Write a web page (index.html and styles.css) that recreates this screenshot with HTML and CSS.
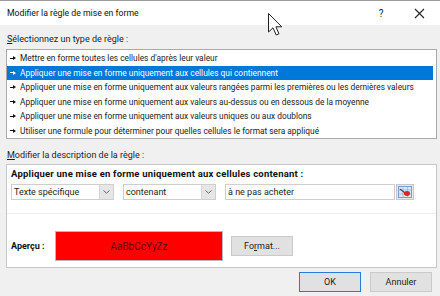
FILE: index.html
```html
<!DOCTYPE html>
<html lang="fr">

<head>
	<meta charset="UTF-8">
	<title>Modifier la règle de mise en forme</title>
	<link rel="stylesheet" href="styles.css">
</head>

<body>
	<div class="dialog">
		<div class="titlebar">
			<span class="title">Modifier la règle de mise en forme</span>
			<span class="help">?</span>
			<span class="close">
				<svg width="11" height="11" viewBox="0 0 11 11"><path d="M1 1L10 10M10 1L1 10" stroke="#222" stroke-width="1.1" fill="none" /></svg>
			</span>
		</div>

		<div class="body">
			<div class="group-label"><u>S</u>électionnez un type de règle :</div>
			<div class="rule-list">
				<div class="rule"><span class="arrow"></span>Mettre en forme toutes les cellules d'après leur valeur</div>
				<div class="rule selected"><span class="arrow"></span>Appliquer une mise en forme uniquement aux cellules qui contiennent</div>
				<div class="rule"><span class="arrow"></span>Appliquer une mise en forme uniquement aux valeurs rangées parmi les premières ou les dernières valeurs</div>
				<div class="rule"><span class="arrow"></span>Appliquer une mise en forme uniquement aux valeurs au-dessus ou en dessous de la moyenne</div>
				<div class="rule"><span class="arrow"></span>Appliquer une mise en forme uniquement aux valeurs uniques ou aux doublons</div>
				<div class="rule"><span class="arrow"></span>Utiliser une formule pour déterminer pour quelles cellules le format sera appliqué</div>
			</div>

			<div class="group-label second"><u>M</u>odifier la description de la règle :</div>
			<div class="desc-box">
				<div class="desc-title">Appliquer une mise en forme uniquement aux cellules contenant :</div>
				<div class="criteria">
					<div class="select first-select">
						<span class="value">Texte spécifique</span>
						<span class="drop">
							<svg width="7" height="4" viewBox="0 0 7 4"><path d="M0.5 0.5L3.5 3.2L6.5 0.5" stroke="#666" fill="none" /></svg>
						</span>
					</div>
					<div class="select second-select">
						<span class="value">contenant</span>
						<span class="drop">
							<svg width="7" height="4" viewBox="0 0 7 4"><path d="M0.5 0.5L3.5 3.2L6.5 0.5" stroke="#666" fill="none" /></svg>
						</span>
					</div>
					<div class="text-input">à ne pas acheter</div>
					<div class="ref-btn">
						<svg width="14" height="12" viewBox="0 0 14 12">
							<rect x="0.5" y="0.5" width="13" height="11" fill="#dfe9f5" stroke="#7a9cc6" />
							<path d="M0.5 4H13.5M0.5 8H13.5M5 0.5V11.5M9.5 0.5V11.5" stroke="#9bb4d4" stroke-width="0.8" />
							<path d="M2 3L7 7" stroke="#2a4f8a" stroke-width="1.3" />
							<ellipse cx="9" cy="7.5" rx="3" ry="2.4" fill="#e0251b" />
						</svg>
					</div>
				</div>
				<div class="separator"></div>
				<div class="preview-row">
					<span class="preview-label">Aperçu :</span>
					<div class="preview">AaBbCcYyZz</div>
					<button type="button" class="btn format-btn">Fo<u>r</u>mat...</button>
				</div>
			</div>

			<div class="button-group">
				<button type="button" class="btn ok-btn">OK</button>
				<button type="button" class="btn">Annuler</button>
			</div>
		</div>

		<svg class="cursor" width="15" height="23" viewBox="0 0 15 23">
			<path d="M0.5 0.5V19L5 14.8L8.2 22L11 20.8L7.9 13.8H13.8Z" fill="#fff" stroke="#222" stroke-width="1" stroke-linejoin="round" />
		</svg>
	</div>
</body>

</html>
```

FILE: styles.css
```css
* {
	box-sizing: border-box;
}

body {
	margin: 0;
	font-family: Roboto, 'Open Sans', sans-serif;
	font-size: 9px;
	color: #1e1e1e;
}

.dialog {
	position: relative;
	width: 440px;
	height: 296px;
	background-color: #f0f0f0;
	overflow: hidden;
}

.titlebar {
	display: flex;
	align-items: center;
	height: 25px;
	background-color: #fff;
	border-top: 1px solid #9a9a9a;
	padding-left: 7px;
}

.title {
	flex: 1;
	font-size: 8.7px;
	color: #111;
}

.help {
	width: 38px;
	margin-left: 4px;
	font-size: 10px;
	color: #222;
	text-align: center;
}

.close {
	display: flex;
	justify-content: center;
	width: 38px;
	margin-right: 2px;
}

.body {
	padding: 0 3px 0 6px;
}

.group-label {
	height: 24px;
	padding: 9px 0 0 1px;
}

.group-label.second {
	height: 25px;
	padding-top: 11px;
}

.rule-list {
	background-color: #fff;
	border: 1px solid #a9a9a9;
	padding: 1px 3px 1px 0;
	height: 90px;
	overflow: hidden;
}

.rule {
	display: flex;
	align-items: center;
	height: 14.5px;
	white-space: nowrap;
	font-size: 8.35px;
	color: #222;
}

.rule .arrow {
	flex-shrink: 0;
	position: relative;
	width: 13px;
	height: 14px;
}

/* petite flèche noire devant chaque type de règle */
.rule .arrow::before {
	content: '';
	position: absolute;
	left: 3px;
	top: 6.5px;
	width: 4px;
	height: 1px;
	background-color: #111;
}

.rule .arrow::after {
	content: '';
	position: absolute;
	left: 6px;
	top: 5px;
	border-left: 3px solid #111;
	border-top: 2px solid transparent;
	border-bottom: 2px solid transparent;
}

.rule.selected {
	background-color: #0078d7;
	color: #fff;
}

.rule.selected .arrow::before {
	background-color: #fff;
}

.rule.selected .arrow::after {
	border-left-color: #fff;
}

.desc-box {
	background-color: #fff;
	border: 1px solid #c6c6c6;
	height: 104px;
	padding: 2px 0 0 4px;
}

.desc-title {
	font-size: 9.5px;
	font-weight: 700;
	letter-spacing: 0.2px;
	height: 17px;
	line-height: 14px;
	color: #111;
}

.criteria {
	display: flex;
	align-items: center;
	gap: 9px;
	height: 16px;
}

.select {
	display: flex;
	height: 16px;
	border: 1px solid #cfcfcf;
	background-color: #fff;
}

.select .value {
	flex: 1;
	line-height: 14px;
	padding-left: 2px;
}

.select .drop {
	display: flex;
	align-items: center;
	justify-content: center;
	width: 14px;
	background-color: #e6e6e6;
	border-left: 1px solid #d6d6d6;
}

.first-select {
	width: 103px;
}

.second-select {
	width: 93px;
}

.text-input {
	width: 170px;
	height: 16px;
	border: 1px solid #cfcfcf;
	line-height: 14px;
	padding-left: 2px;
}

.ref-btn {
	display: flex;
	align-items: center;
	justify-content: center;
	width: 18px;
	height: 16px;
	margin-left: -8px;
	background-color: #e8e8e8;
	border: 1px solid #c8c8c8;
}

.separator {
	height: 1px;
	margin: 13px 0 0 -4px;
	background-color: #ececec;
}

.preview-row {
	display: flex;
	align-items: center;
	margin-top: 17px;
}

.preview-label {
	font-weight: 700;
	width: 44px;
	color: #111;
}

.preview {
	width: 168px;
	height: 30px;
	background-color: #ff0000;
	border: 1px solid #b8b8b8;
	color: #5a0000;
	font-size: 10px;
	display: flex;
	align-items: center;
	justify-content: center;
}

.btn {
	font-family: inherit;
	font-size: 9px;
	color: #222;
	width: 62px;
	height: 20px;
	padding: 0;
	background-color: #e1e1e1;
	border: 1px solid #cacaca;
}

.format-btn {
	margin-left: 8px;
}

.button-group {
	display: flex;
	justify-content: flex-end;
	gap: 9px;
	margin-top: 4px;
	padding-right: 5px;
}

.ok-btn {
	border: 1px solid #2d7ad6;
}

.cursor {
	position: absolute;
	left: 268px;
	top: 13px;
}
```
